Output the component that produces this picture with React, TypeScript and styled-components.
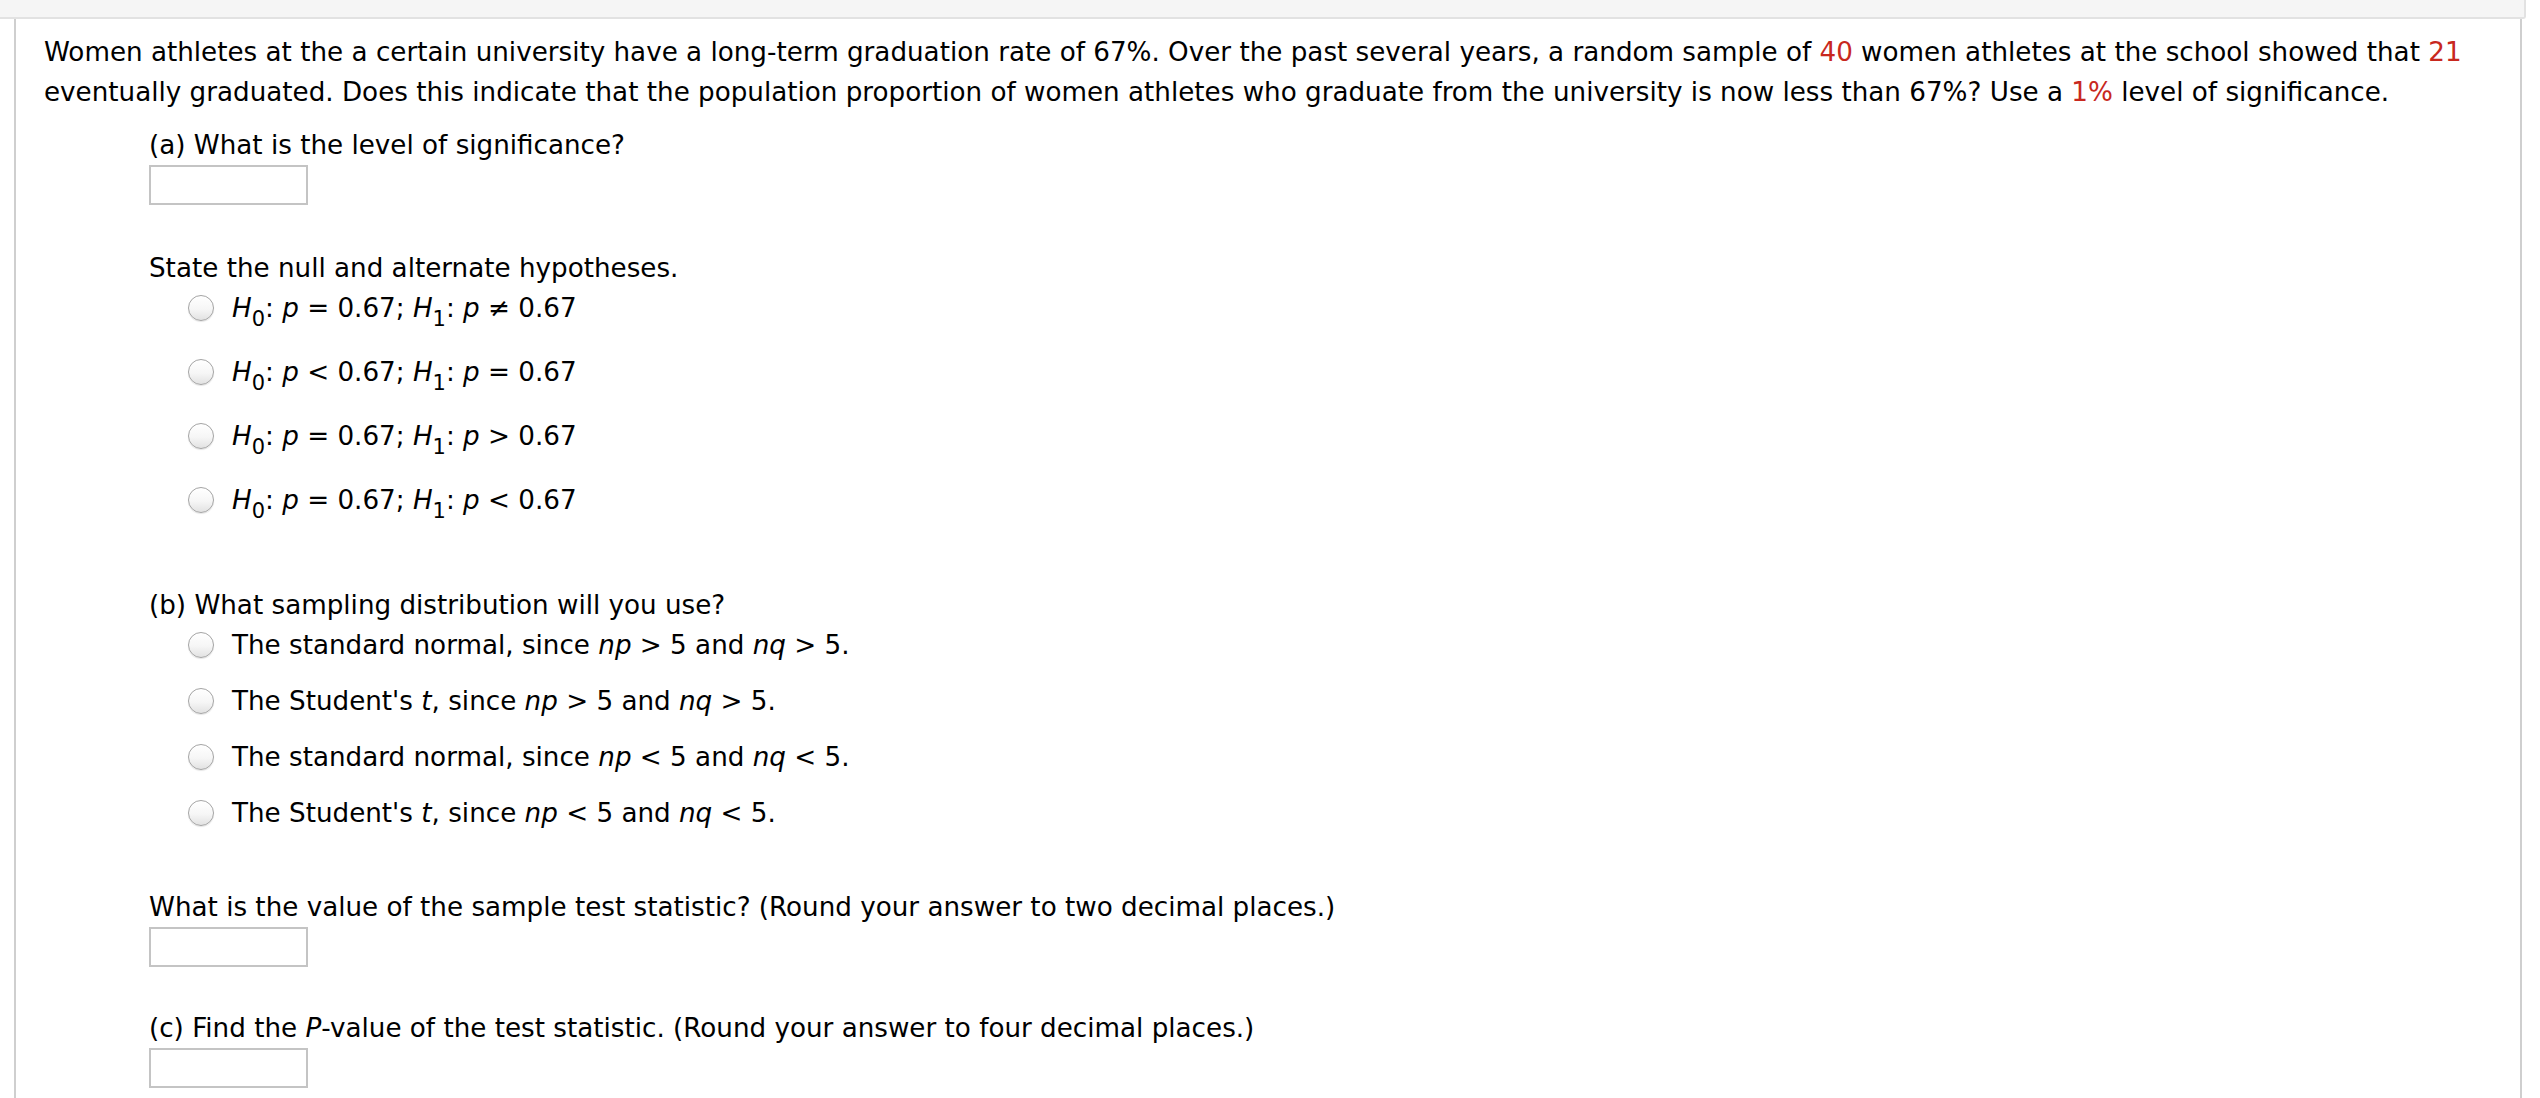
import React from 'react';
import styled, { createGlobalStyle } from 'styled-components';

const GlobalStyle = createGlobalStyle`
    html, body {
        margin: 0;
        padding: 0;
        background: #ffffff;
    }
    body {
        font-family: "DejaVu Sans", Verdana, sans-serif;
        font-size: 26.2px;
        color: #000;
    }
`;

const TopStrip = styled.div`
    width: 2524px;
    height: 17px;
    background-color: #f5f5f5;
    border-bottom: 2px solid #e2e2e2;
    border-right: 2px solid #e2e2e2;
    border-bottom-right-radius: 3px;
`;

const Panel = styled.div`
    margin-left: 14px;
    width: 2508px;
    min-height: 1079px;
    box-sizing: border-box;
    border-left: 2px solid #cfcfcf;
    border-right: 2px solid #cfcfcf;
    padding: 13px 40px 0 28px;
    line-height: 40px;
`;

const Intro = styled.p`
    margin: 0;
`;

const Red = styled.span`
    color: #c8281e;
`;

const Part = styled.div<{ $top: number }>`
    margin-left: 105px;
    margin-top: ${props => props.$top}px;
`;

const Prompt = styled.div`
    margin: 0;
`;

const AnswerBox = styled.div`
    width: 159px;
    height: 40px;
    box-sizing: border-box;
    border: 2px solid #c4c4c4;
    background: #fff;
`;

const OptionList = styled.div<{ $gap: number }>`
    display: flex;
    flex-direction: column;
    gap: ${props => props.$gap}px;
    margin-left: 39px;
`;

const Option = styled.label`
    display: flex;
    align-items: center;
    gap: 18px;
    height: 40px;
`;

const Radio = styled.span`
    width: 26px;
    height: 26px;
    box-sizing: border-box;
    border-radius: 50%;
    border: 1px solid #a4a4a4;
    background: linear-gradient(#ffffff 0%, #f6f6f6 55%, #e2e2e2 100%);
    box-shadow: inset 0 1px 1px rgba(255, 255, 255, 0.9), 0 1px 1px rgba(0, 0, 0, 0.1);
    flex: none;
`;

const I = styled.i`
    font-style: italic;
`;

const Sub = styled.sub`
    font-size: 0.8em;
    vertical-align: -0.42em;
    line-height: 0;
`;

const H = ({ n }: { n: number }) => (
    <>
        <I>H</I>
        <Sub>{n}</Sub>
    </>
);

const hypotheses: [string, string, string, string][] = [
    ['=', '0.67', '≠', '0.67'],
    ['<', '0.67', '=', '0.67'],
    ['=', '0.67', '>', '0.67'],
    ['=', '0.67', '<', '0.67'],
];

const distributions: { name: React.ReactNode; op: string }[] = [
    { name: 'The standard normal', op: '>' },
    { name: <>The Student's <I>t</I></>, op: '>' },
    { name: 'The standard normal', op: '<' },
    { name: <>The Student's <I>t</I></>, op: '<' },
];

export default function App() {
    return (
        <>
            <GlobalStyle />
            <TopStrip />
            <Panel>
                <Intro>
                    Women athletes at the a certain university have a long-term graduation rate of 67%. Over the past
                    several years, a random sample of <Red>40</Red> women athletes at the school showed that <Red>21</Red>{' '}
                    eventually graduated. Does this indicate that the population proportion of women athletes who
                    graduate from the university is now less than 67%? Use a <Red>1%</Red> level of significance.
                </Intro>

                <Part $top={13}>
                    <Prompt>(a) What is the level of significance?</Prompt>
                    <AnswerBox />
                </Part>

                <Part $top={43}>
                    <Prompt>State the null and alternate hypotheses.</Prompt>
                    <OptionList $gap={24}>
                        {hypotheses.map(([a, b, c, d], i) => (
                            <Option key={i}>
                                <Radio />
                                <span>
                                    <H n={0} />: <I>p</I> {a} {b}; <H n={1} />: <I>p</I> {c} {d}
                                </span>
                            </Option>
                        ))}
                    </OptionList>
                </Part>

                <Part $top={65}>
                    <Prompt>(b) What sampling distribution will you use?</Prompt>
                    <OptionList $gap={16}>
                        {distributions.map((d, i) => (
                            <Option key={i}>
                                <Radio />
                                <span>
                                    {d.name}, since <I>np</I> {d.op} 5 and <I>nq</I> {d.op} 5.
                                </span>
                            </Option>
                        ))}
                    </OptionList>
                </Part>

                <Part $top={54}>
                    <Prompt>What is the value of the sample test statistic? (Round your answer to two decimal places.)</Prompt>
                    <AnswerBox />
                </Part>

                <Part $top={41}>
                    <Prompt>
                        (c) Find the <I>P</I>-value of the test statistic. (Round your answer to four decimal places.)
                    </Prompt>
                    <AnswerBox />
                </Part>
            </Panel>
        </>
    );
}
